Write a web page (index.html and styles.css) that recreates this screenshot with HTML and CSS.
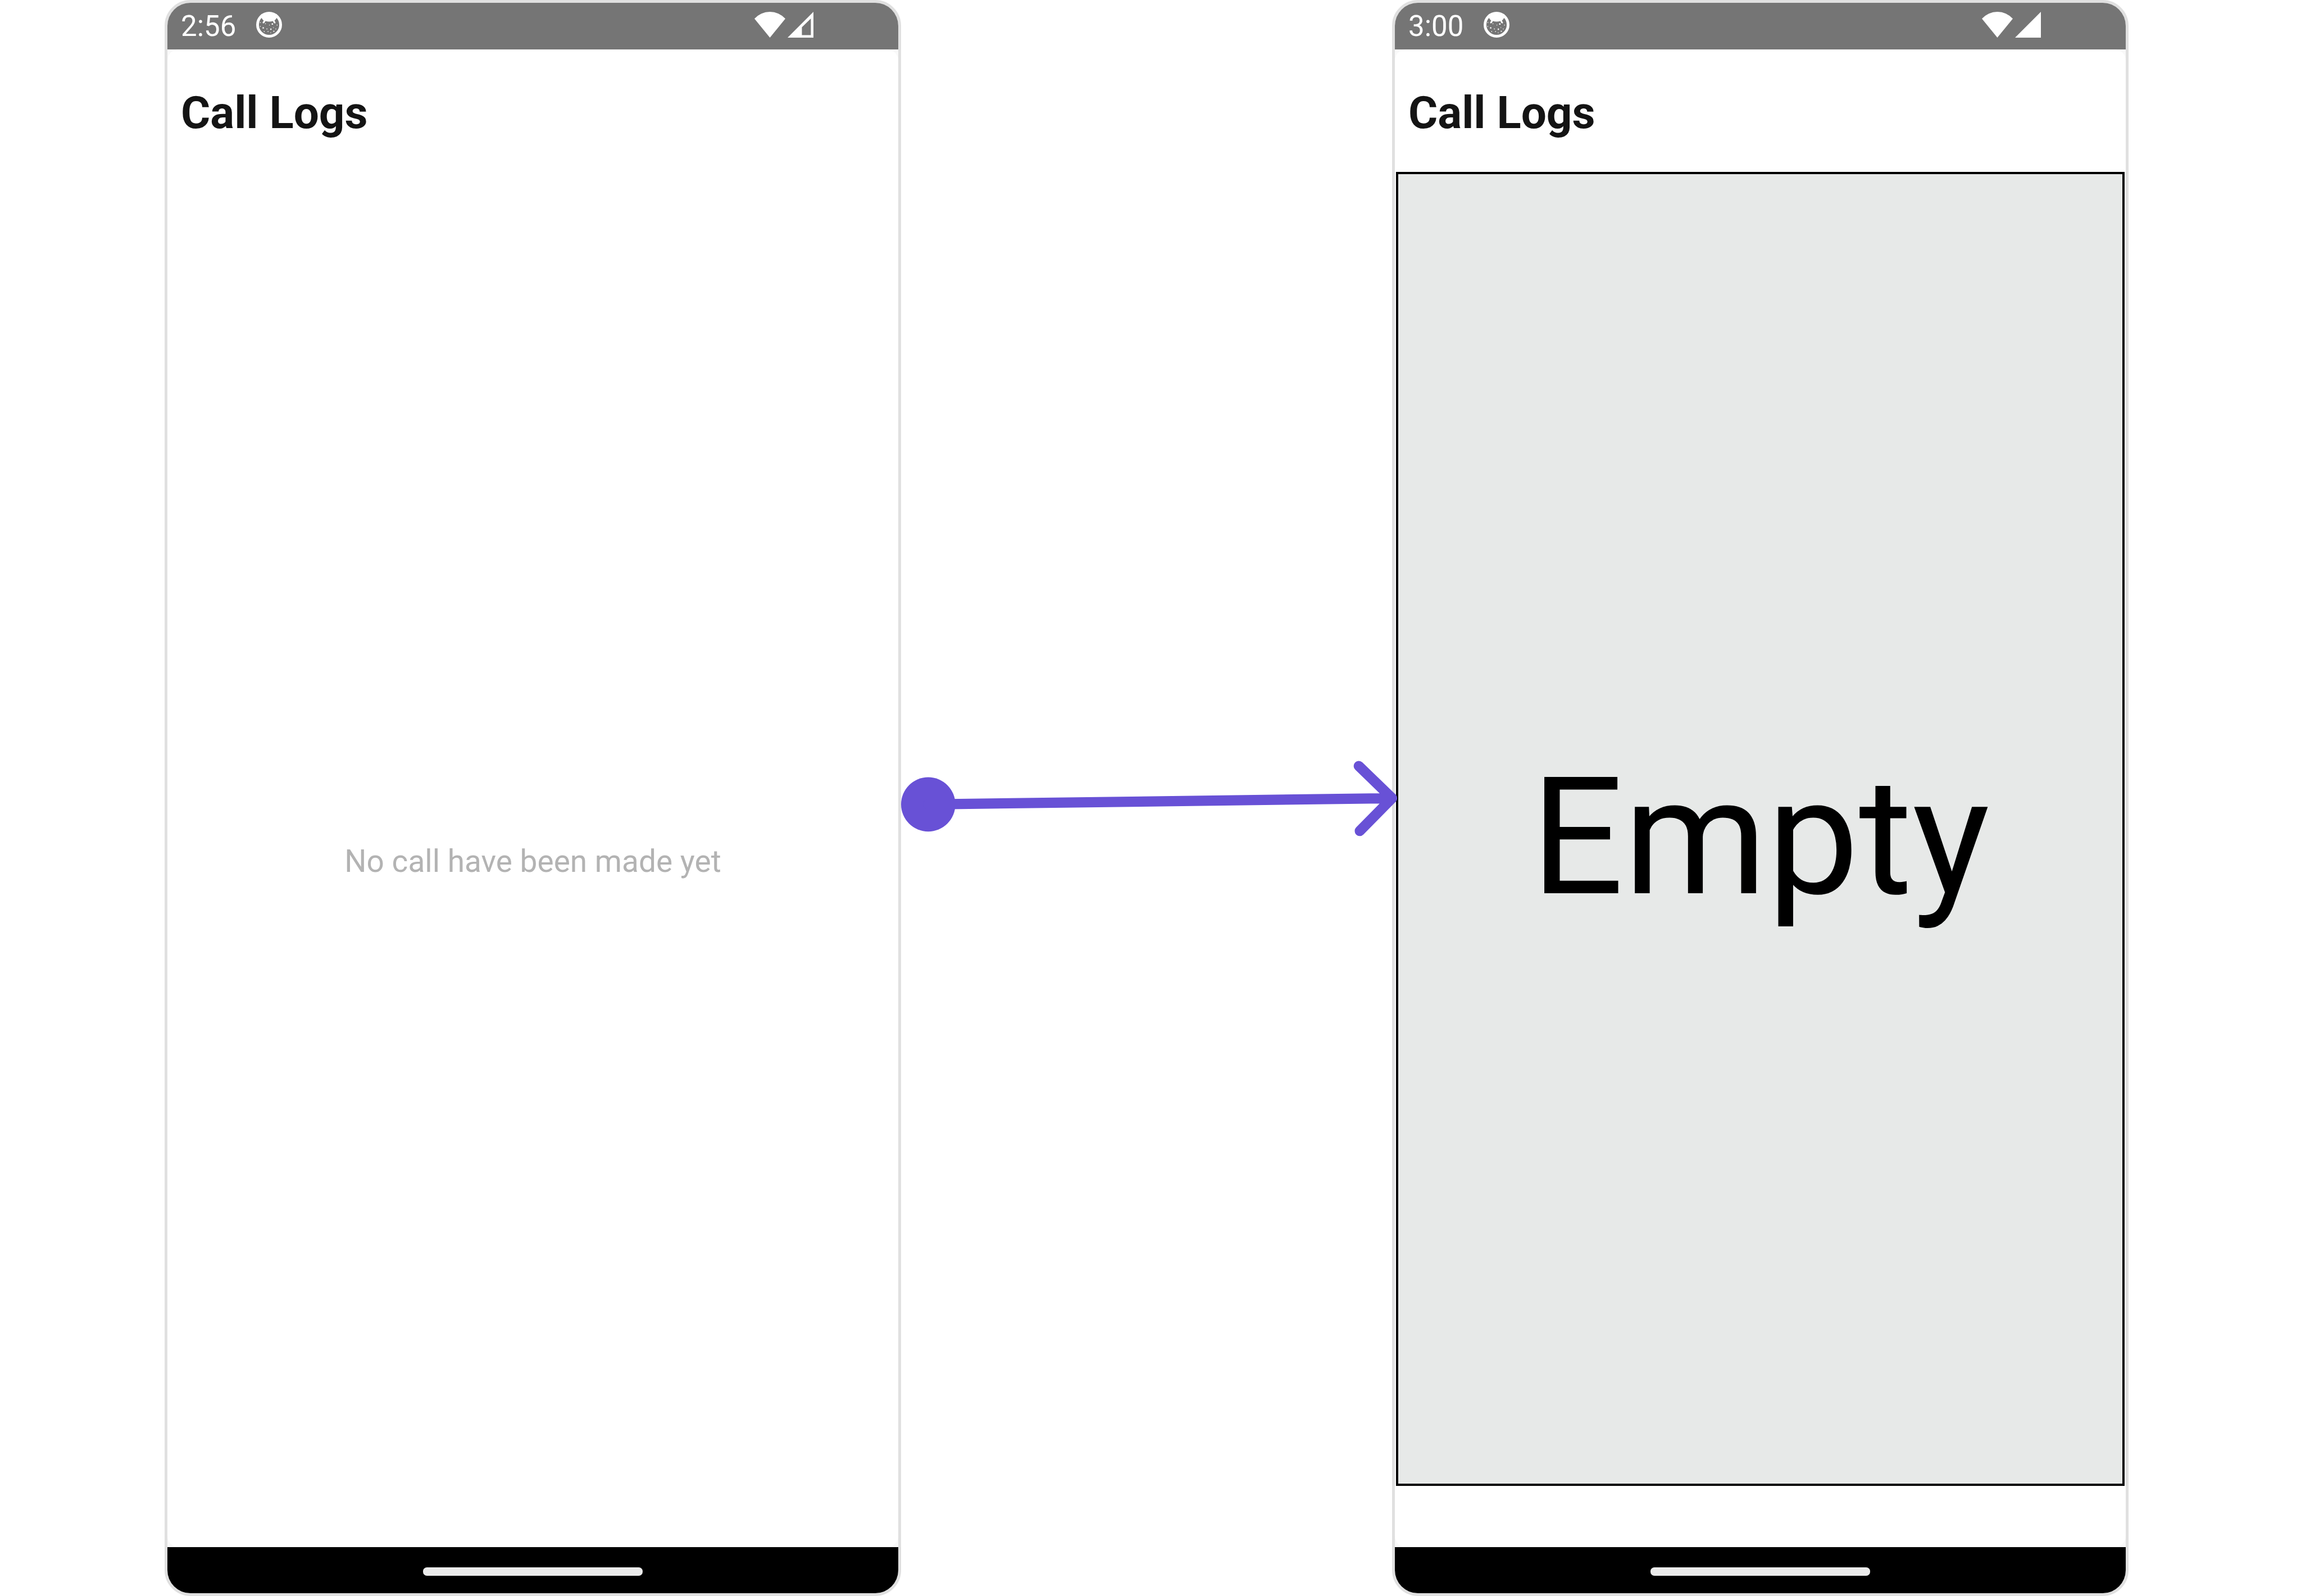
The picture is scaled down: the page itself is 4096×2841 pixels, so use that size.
FILE: index.html
```html
<!DOCTYPE html>
<html lang="en">
<head>
<meta charset="utf-8">
<title>Call Logs empty state</title>
<link rel="stylesheet" href="styles.css">
</head>
<body>
<svg class="symbols" aria-hidden="true">
  <symbol id="icon-face" viewBox="0 0 150 150">
    <circle cx="75" cy="75" r="67" fill="none" stroke="currentColor" stroke-width="16"/>
    <path d="M12 44 L31 35 Q35 44 44 51 L37 62 Q38 68 43 67 L47 65 L54 54 Q75 60 97 54 L103 65 L109 68 Q114 66 112 61 L106 51 Q115 44 119 35 L138 44 L120 15 L75 3 L30 15 Z" fill="currentColor"/>
    <path d="M22 60h5v4h-5z M22 82h4v5h-4z M37 90h8v7h-8z M52 67h4v5h-4z M60 97h5v5h-5z M67 112h4v5h-4z M75 75h4v4h-4z M82 97h7v8h-7z M82 120h5v3h-5z M90 67h8v8h-8z M98 90h4v3h-4z M112 97h4v5h-4z M119 75h5v4h-5z M99 110h7v6h-7z M45 112h4v5h-4z" fill="currentColor"/>
  </symbol>
  <symbol id="icon-wifi" viewBox="0 0 180 150">
    <path d="M0 40 A121 121 0 0 1 180 40 L90 150 Z" fill="currentColor"/>
  </symbol>
  <symbol id="icon-signal" viewBox="0 0 150 150">
    <path d="M0 150 L150 0 V150 Z" fill="currentColor"/>
  </symbol>
  <symbol id="icon-signal-partial" viewBox="0 0 150 150">
    <path d="M0 150 L150 0 V150 Z M83 90 V135 H135 V39 Z" fill="currentColor" fill-rule="evenodd"/>
  </symbol>
</svg>

<main class="board">
  <section class="phone">
    <header class="status-bar">
      <time>2:56</time>
      <svg class="icon"><use href="#icon-face"/></svg>
      <div class="connectivity">
        <svg class="icon icon-wide"><use href="#icon-wifi"/></svg>
        <svg class="icon"><use href="#icon-signal-partial"/></svg>
      </div>
    </header>
    <div class="screen">
      <h1 class="title">Call Logs</h1>
      <p class="empty-message">No call have been made yet</p>
    </div>
    <footer class="nav-bar"><span class="handle"></span></footer>
  </section>

  <svg class="arrow" viewBox="0 0 959 160" aria-hidden="true">
    <circle cx="53" cy="92" r="53" fill="#6851d6"/>
    <path d="M53 92 L959 80 M894 17 L959 80 L896 144" fill="none" stroke="#6851d6" stroke-width="20" stroke-linecap="round" stroke-linejoin="round"/>
  </svg>

  <section class="phone">
    <header class="status-bar">
      <time>3:00</time>
      <svg class="icon"><use href="#icon-face"/></svg>
      <div class="connectivity">
        <svg class="icon icon-wide"><use href="#icon-wifi"/></svg>
        <svg class="icon"><use href="#icon-signal"/></svg>
      </div>
    </header>
    <div class="screen">
      <h1 class="title">Call Logs</h1>
      <div class="empty-panel">Empty</div>
    </div>
    <footer class="nav-bar"><span class="handle"></span></footer>
  </section>
</main>
</body>
</html>
```
FILE: styles.css
```css
* {
  box-sizing: border-box;
}

body {
  margin: 0;
  background: #fff;
  font-family: Roboto, "Liberation Sans", sans-serif;
}

.symbols {
  display: none;
}

.board {
  display: grid;
  grid-template-columns: 3fr 2fr 3fr;
  min-height: 100vh;
  padding: 0 307px 0 293px;
}

.phone {
  display: flex;
  flex-direction: column;
  overflow: hidden;
  border: 5px solid #e0e0e0;
  border-radius: 46px;
  background: #f9f9f9;
}

.status-bar {
  display: flex;
  align-items: center;
  height: 83px;
  padding: 0 151px 0 24px;
  background: #757575;
  color: #fff;
  font-size: 51px;
  line-height: 60px;
}

.status-bar time {
  margin-right: 36px;
}

.icon {
  width: 46px;
  height: 46px;
  margin-bottom: 6px;
}

.icon-wide {
  width: 55px;
}

.connectivity {
  display: flex;
  gap: 4px;
  margin-left: auto;
}

.screen {
  display: flex;
  flex: 1;
  flex-direction: column;
  border-radius: 20px;
  background: #fff;
}

.title {
  margin: 0;
  padding: 66px 24px 58px;
  color: #141414;
  font-size: 80px;
  font-weight: 700;
  line-height: 94px;
}

.empty-message {
  display: flex;
  flex: 1;
  align-items: center;
  justify-content: center;
  margin: 0;
  padding-top: 6px;
  color: #b3b3b3;
  font-size: 55px;
  line-height: 64px;
}

.empty-panel {
  display: flex;
  flex: 1;
  align-items: center;
  justify-content: center;
  margin: 0 2px 109px;
  padding-top: 30px;
  border: 4px solid #000;
  background: #e7e9e8;
  color: #000;
  font-size: 291px;
  line-height: 340px;
}

.nav-bar {
  display: flex;
  align-items: center;
  justify-content: center;
  height: 82px;
  padding-top: 4px;
  background: #000;
}

.handle {
  width: 30%;
  height: 15px;
  border-radius: 7px;
  background: #ebebeb;
}

.arrow {
  z-index: 1;
  align-self: center;
  width: 100%;
  overflow: visible;
}
```
